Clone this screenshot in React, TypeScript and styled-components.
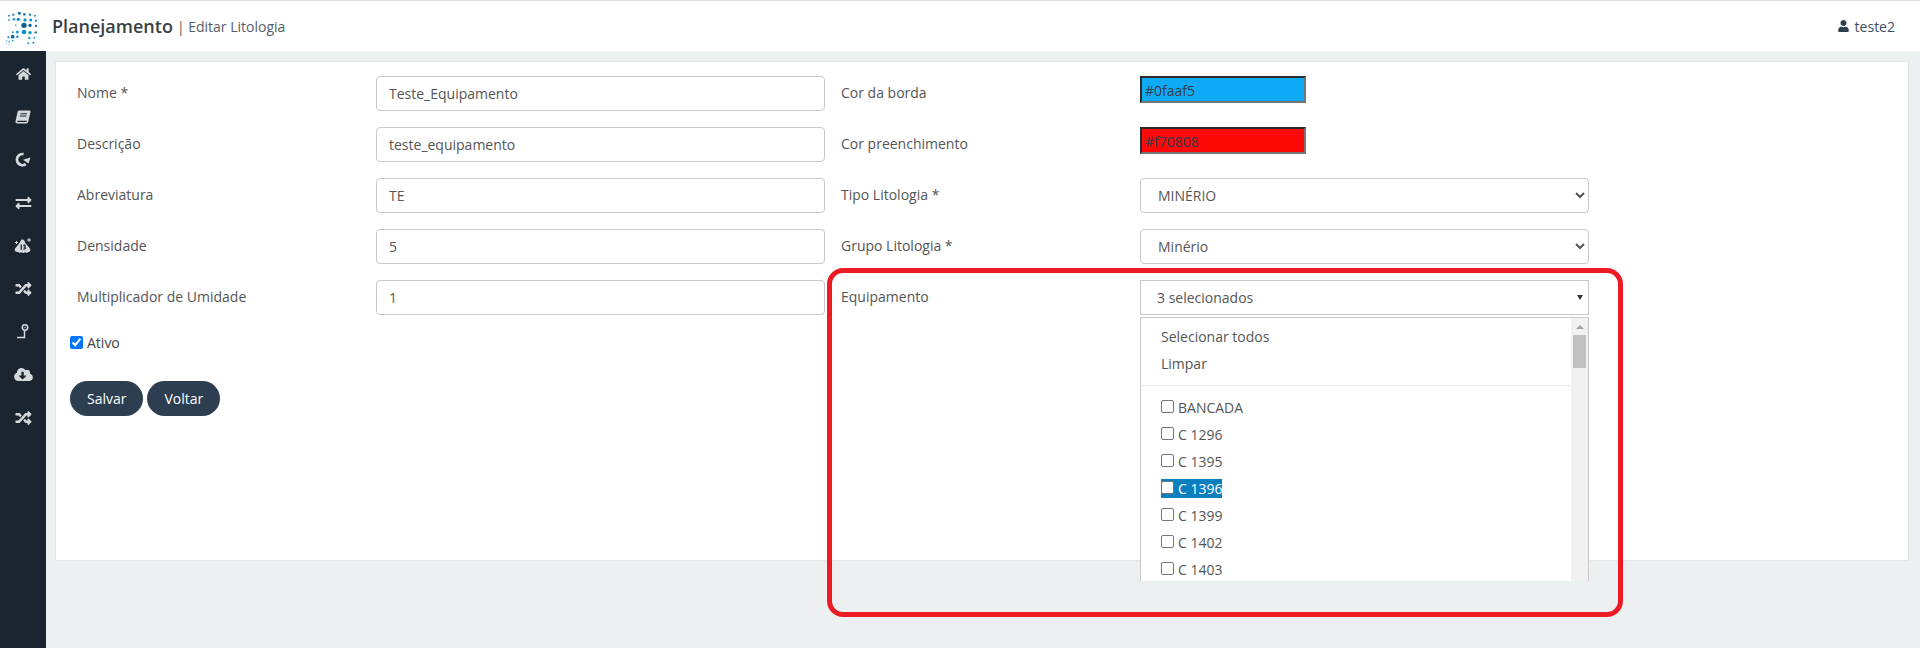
import React from "react";
import styled, { createGlobalStyle } from "styled-components";
import { FaHome, FaExchangeAlt, FaRandom, FaCloudDownloadAlt, FaUser } from "react-icons/fa";

const Global = createGlobalStyle`
  html, body { margin: 0; padding: 0; height: 100%; overflow: hidden; }
  body { font-family: "Open Sans", "Noto Sans", sans-serif; font-size: 14px; color: #555; background: #ecf0f1; }
  * { box-sizing: border-box; }
`;

const Page = styled.div`
  position: relative;
  width: 1920px;
  height: 648px;
  display: flex;
  flex-direction: column;
  overflow: hidden;
`;

const Header = styled.header`
  height: 51px;
  flex: none;
  background: #fff;
  border-top: 1px solid #e2e2e2;
  display: flex;
  align-items: center;
  padding: 0 25px 0 5px;
`;

const Logo = styled.svg`
  width: 34px;
  height: 34px;
  margin-top: 6px;
  flex: none;
`;

const Title = styled.span`
  margin-left: 13px;
  font-size: 18px;
  font-weight: 600;
  color: #3a3f44;
`;

const Crumb = styled.span`
  margin-left: 4px;
  font-size: 14px;
  color: #555e66;
`;

const UserBox = styled.div`
  margin-left: auto;
  display: flex;
  align-items: center;
  gap: 6px;
  color: #3c5064;
  font-size: 14px;
  svg { color: #2c3e50; width: 11px; height: 12px; }
`;

const Body = styled.div`
  flex: 1;
  display: flex;
  min-height: 0;
`;

const Sidebar = styled.nav`
  width: 46px;
  flex: none;
  background: #1a2530;
  display: flex;
  flex-direction: column;
  padding-top: 1px;
`;

const SideItem = styled.div<{ $w?: number; $h?: number }>`
  height: 43px;
  display: flex;
  align-items: center;
  justify-content: center;
  color: #d6d9dc;
  svg { width: ${(p) => p.$w ?? 16}px; height: ${(p) => p.$h ?? 16}px; display: block; }
`;

const Main = styled.main`
  flex: 1;
  padding: 10px 11px 0 9px;
`;

const Card = styled.section`
  position: relative;
  height: 500px;
  background: #fff;
  border: 1px solid #e4e7e8;
  padding: 14px 0 0 14px;
`;

const Columns = styled.div`
  display: grid;
  grid-template-columns: 771px 619px;
`;

const Column = styled.div`
  display: flex;
  flex-direction: column;
`;

const Field = styled.div`
  height: 51px;
  display: grid;
  grid-template-columns: 299px 449px;
  padding-left: 7px;
  align-items: start;
`;

const RightField = styled(Field)`
  padding-left: 0;
`;

const Label = styled.label`
  font-size: 14px;
  line-height: 20px;
  padding-top: 7px;
  color: #555;
`;

const Input = styled.input`
  width: 449px;
  height: 35px;
  border: 1px solid #c8c8c8;
  border-radius: 4px;
  padding: 0 12px;
  font: 14px "Open Sans", sans-serif;
  color: #555;
  background: #fff;
  outline: none;
`;

const Select = styled.select`
  width: 449px;
  height: 35px;
  border: 1px solid #c8c8c8;
  border-radius: 4px;
  padding: 0 13px;
  font: 14px "Open Sans", sans-serif;
  color: #555;
  background: #fff;
  outline: none;
`;

const Swatch = styled.div<{ $color: string }>`
  width: 166px;
  height: 27px;
  background: ${(p) => p.$color};
  border-style: solid;
  border-width: 2px;
  border-color: #2b2b2b #767676 #767676 #2b2b2b;
  font-size: 14px;
  line-height: 25px;
  padding-left: 3px;
  color: #333f49;
`;

const Checkline = styled.div`
  display: flex;
  align-items: center;
  height: 22px;
  margin-top: 0;
  gap: 4px;
  font-size: 14px;
  color: #444;
`;

const Check = styled.input`
  width: 13px;
  height: 13px;
  margin: 0;
  accent-color: #0075ff;
`;

const Buttons = styled.div`
  display: flex;
  gap: 4px;
  margin-top: 28px;
`;

const Pill = styled.button`
  height: 35px;
  padding: 0 17px;
  border: 0;
  border-radius: 18px;
  background: #2c3e50;
  color: #fff;
  font: 400 14px "Open Sans", sans-serif;
`;

const MultiButton = styled.div`
  width: 449px;
  height: 35px;
  border: 1px solid #c8c8c8;
  background: #fff;
  padding: 0 16px;
  display: flex;
  align-items: center;
  justify-content: space-between;
  font-size: 14px;
  color: #555;
`;

const Caret = styled.span`
  width: 0;
  height: 0;
  margin-right: -11px;
  border-left: 3px solid transparent;
  border-right: 3px solid transparent;
  border-top: 5px solid #333;
`;

const Dropdown = styled.div`
  position: absolute;
  left: 1084px;
  top: 255px;
  width: 449px;
  height: 264px;
  display: flex;
  background: #fff;
  border: 1px solid #c8c8c8;
  border-bottom: 0;
  overflow: hidden;
`;

const DropList = styled.div`
  flex: 1;
  min-width: 0;
  padding-top: 5px;
`;

const Action = styled.div`
  height: 27px;
  padding-left: 20px;
  display: flex;
  align-items: center;
  font-size: 14px;
  color: #555;
`;

const Divider = styled.div`
  height: 1px;
  background: #e5e5e5;
  margin: 8px 0 8px;
`;

const Option = styled.div`
  height: 27px;
  padding-left: 20px;
  display: flex;
  align-items: center;
  font-size: 14px;
  color: #555;
`;

const OptionInner = styled.span<{ $active?: boolean }>`
  display: inline-flex;
  align-items: center;
  height: 19px;
  gap: 4px;
  background: ${(p) => (p.$active ? "#0a7fc0" : "transparent")};
  color: ${(p) => (p.$active ? "#fff" : "#555")};
`;

const Box = styled.span`
  width: 13px;
  height: 13px;
  margin-top: -3px;
  border: 1px solid #767676;
  border-radius: 2px;
  background: #fff;
`;

const Scrollbar = styled.div`
  width: 17px;
  flex: none;
  background: #f1f1f1;
  display: flex;
  flex-direction: column;
  align-items: center;
`;

const ArrowUp = styled.span`
  margin-top: 7px;
  width: 0;
  height: 0;
  border-left: 4px solid transparent;
  border-right: 4px solid transparent;
  border-bottom: 4px solid #a3a3a3;
`;

const Thumb = styled.div`
  margin-top: 6px;
  width: 13px;
  height: 33px;
  background: #c1c1c1;
`;

const Annotation = styled.div`
  position: absolute;
  left: 827px;
  top: 268px;
  width: 796px;
  height: 349px;
  border: 5px solid #ed1c24;
  border-radius: 16px;
  pointer-events: none;
`;

const BookIcon = () => (
  <svg viewBox="0 0 16 16" fill="currentColor">
    <path
      fillRule="evenodd"
      d="M4.6 1.5h9.6c1 0 1.5.7 1.3 1.6l-2.2 9.5c-.3 1.2-1 1.9-2.2 1.9H2.4C1 14.5.2 13.6.5 12.3L2.5 3.2C2.7 2.2 3.5 1.5 4.6 1.5zM5.6 4.2l-.3 1h6.6l.3-1H5.6zM5 6.6l-.3 1h6.6l.3-1H5zM2.3 12c-.2.6.1 1.1.8 1.1h7.7c.5 0 .9-.3 1-.7l.2-.7H3.1c-.4 0-.7 0-.8.3z"
    />
  </svg>
);

const RotateIcon = () => (
  <svg viewBox="0 0 16 16" fill="none">
    <path d="M8.5 2.1A5.6 5.6 0 1 0 10.8 12.2" stroke="currentColor" strokeWidth="2.7" />
    <path d="M8 7.7l7.5-2.2-2 6z" fill="currentColor" />
  </svg>
);

const AlertIcon = () => (
  <svg viewBox="0 0 18 16" fill="currentColor">
    <path d="M7.3 1.8c1.1-.7 2.5-.3 3.1 1l1.2 2.7 4 4.5c1.3 1.8.9 3.9-1.4 4.1l-1.2 1-1.5-.8-2.3.8-2.2-.8-1.6.8-1.3-1C.8 14 .1 12 1.2 10.2L5.2 5.5z" />
    <path d="M6.6 6.5h1.3v5.2H6.6zM10 6.5c1.4 0 1.9.6 1.9 1.4 0 .5-.3.8-.7 1 .5.2.9.6.9 1.2 0 1-.8 1.6-2.1 1.6l-.8-.1v-1h.8c.5 0 .8-.2.8-.5s-.3-.5-.8-.5h-.5v-1h.5c.4 0 .7-.2.7-.5s-.3-.4-.7-.4H9.2v-1z" fill="#1a2530" />
    <path d="M14.5 0h1v1.5H17v1h-1.500V4h-1V2.500H13v-1h1.500zM2 3h1v1h1v1H3v1H2V5H1V4h1z" />
  </svg>
);

const PinIcon = () => (
  <svg viewBox="0 0 16 16" fill="none" stroke="currentColor" strokeWidth="1.5">
    <circle cx="10" cy="3.5" r="2.7" />
    <circle cx="10" cy="3.5" r=".7" fill="currentColor" stroke="none" />
    <path d="M9.5 6.5V13.5H2" />
  </svg>
);

// Coordinates match the logo's dots as read from the reference, at 3x.
const dots: [number, number, number, string][] = [
  [27, 47, 3, "#2b86b8"], [40, 44, 3.5, "#2b86b8"], [58, 40, 4.5, "#0f6d9f"], [73, 43, 4, "#1b7fb0"], [90, 44, 3.5, "#1b7fb0"], [105, 47, 3, "#2b86b8"],
  [27, 60, 3, "#35a6d6"], [42, 58, 4, "#1d9ad0"], [55, 58, 5, "#0e93cc"], [75, 60, 5, "#0e93cc"], [92, 60, 4.5, "#0e93cc"], [108, 62, 3.5, "#1d9ad0"],
  [47, 76, 2.5, "#35a6d6"], [72, 76, 8, "#0b5e90"], [90, 76, 5, "#0b5e90"], [108, 78, 3.5, "#0f6d9f"],
  [38, 97, 3, "#1d9ad0"], [52, 96, 4.5, "#1d9ad0"], [72, 96, 7, "#0e93cc"], [90, 98, 5, "#0e93cc"], [107, 97, 3.5, "#0f6d9f"],
  [25, 112, 3, "#1b7fb0"], [38, 110, 5.5, "#0f6d9f"], [52, 110, 3.5, "#1b7fb0"], [88, 114, 3.5, "#1d9ad0"], [103, 113, 3, "#1d9ad0"],
  [20, 122, 2, "#35a6d6"], [28, 125, 2.5, "#35a6d6"], [38, 122, 2.5, "#1d9ad0"], [85, 130, 3, "#0e93cc"], [100, 128, 3, "#0e93cc"],
  [20, 130, 1.5, "#35a6d6"], [27, 133, 1.5, "#35a6d6"],
];

const left = [
  ["Nome *", "Teste_Equipamento"],
  ["Descrição", "teste_equipamento"],
  ["Abreviatura", "TE"],
  ["Densidade", "5"],
  ["Multiplicador de Umidade", "1"],
];

const options = ["BANCADA", "C 1296", "C 1395", "C 1396", "C 1399", "C 1402", "C 1403"];

export default function App() {
  return (
    <Page>
      <Global />
      <Header>
        <Logo viewBox="15 36 102 102">
          {dots.map(([x, y, r, c], i) => (
            <circle key={i} cx={x} cy={y} r={r} fill={c} />
          ))}
        </Logo>
        <Title>Planejamento</Title>
        <Crumb>| Editar Litologia</Crumb>
        <UserBox>
          <FaUser />
          teste2
        </UserBox>
      </Header>
      <Body>
        <Sidebar>
          <SideItem $w={15} $h={14}><FaHome /></SideItem>
          <SideItem><BookIcon /></SideItem>
          <SideItem><RotateIcon /></SideItem>
          <SideItem $w={17}><FaExchangeAlt /></SideItem>
          <SideItem $w={18}><AlertIcon /></SideItem>
          <SideItem $w={17}><FaRandom /></SideItem>
          <SideItem><PinIcon /></SideItem>
          <SideItem $w={19} $h={15}><FaCloudDownloadAlt /></SideItem>
          <SideItem $w={17}><FaRandom /></SideItem>
        </Sidebar>
        <Main>
          <Card>
            <Columns>
              <Column>
                {left.map(([l, v]) => (
                  <Field key={l}>
                    <Label>{l}</Label>
                    <Input defaultValue={v} />
                  </Field>
                ))}
                <Checkline>
                  <Check type="checkbox" defaultChecked />
                  Ativo
                </Checkline>
                <Buttons>
                  <Pill>Salvar</Pill>
                  <Pill>Voltar</Pill>
                </Buttons>
              </Column>
              <Column>
                <RightField>
                  <Label>Cor da borda</Label>
                  <Swatch $color="#0faaf5">#0faaf5</Swatch>
                </RightField>
                <RightField>
                  <Label>Cor preenchimento</Label>
                  <Swatch $color="#ff0808">#f70808</Swatch>
                </RightField>
                <RightField>
                  <Label>Tipo Litologia *</Label>
                  <Select defaultValue="MINÉRIO"><option>MINÉRIO</option></Select>
                </RightField>
                <RightField>
                  <Label>Grupo Litologia *</Label>
                  <Select defaultValue="Minério"><option>Minério</option></Select>
                </RightField>
                <RightField>
                  <Label>Equipamento</Label>
                  <MultiButton>3 selecionados<Caret /></MultiButton>
                </RightField>
              </Column>
            </Columns>
            <Dropdown>
              <DropList>
                <Action>Selecionar todos</Action>
                <Action>Limpar</Action>
                <Divider />
                {options.map((o) => (
                  <Option key={o}>
                    <OptionInner $active={o === "C 1396"}>
                      <Box />
                      {o}
                    </OptionInner>
                  </Option>
                ))}
              </DropList>
              <Scrollbar>
                <ArrowUp />
                <Thumb />
              </Scrollbar>
            </Dropdown>
          </Card>
        </Main>
      </Body>
      <Annotation />
    </Page>
  );
}
